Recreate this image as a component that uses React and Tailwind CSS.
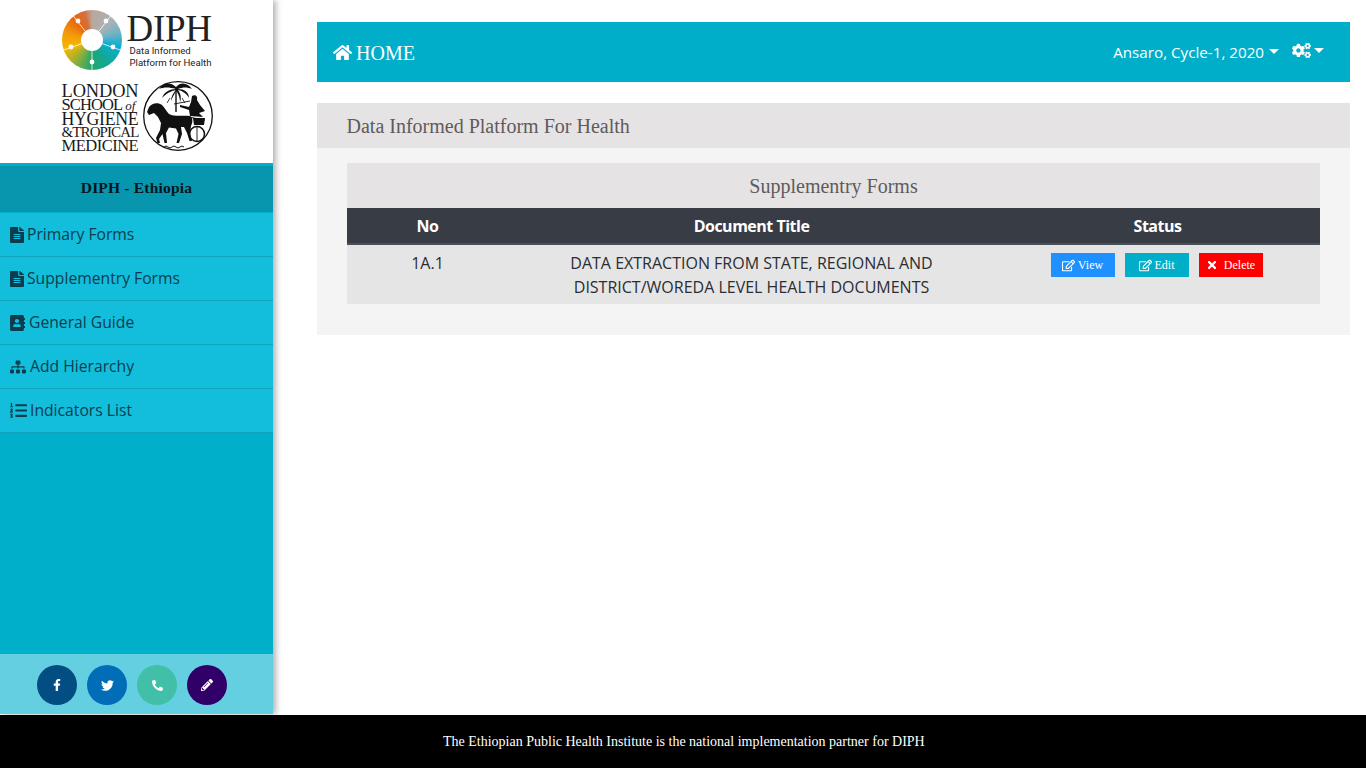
import React from "react";
import { FaHome, FaFileAlt, FaAddressBook, FaSitemap, FaListOl, FaCogs, FaFacebookF, FaTwitter, FaPhone, FaPencilAlt, FaRegEdit, FaTimes } from "react-icons/fa";

const fileIcon = { className: "w-[14px] h-[16px]", preserveAspectRatio: "none" };
const menu = [
  { label: "Primary Forms", Icon: FaFileAlt, gap: "gap-[3px]", props: fileIcon },
  { label: "Supplementry Forms", Icon: FaFileAlt, gap: "gap-[3px]", props: fileIcon },
  { label: "General Guide", Icon: FaAddressBook, gap: "gap-[4px]", props: { className: "w-[15px] h-[16px]", preserveAspectRatio: "none" } },
  { label: "Add Hierarchy", Icon: FaSitemap, gap: "gap-[4px]", props: { size: 16 } },
  { label: "Indicators List", Icon: FaListOl, gap: "gap-[3px]", props: { size: 17 } },
];

const social = [
  { Icon: FaFacebookF, bg: "bg-[#024e82]", size: 12 },
  { Icon: FaTwitter, bg: "bg-[#006db6]", size: 13 },
  { Icon: FaPhone, bg: "bg-[#42bfa8]", size: 11, flip: true },
  { Icon: FaPencilAlt, bg: "bg-[#300068]", size: 12 },
];

function DiphDisc() {
  const spokes = [[78, 21, 71, 13], [106, 21, 113, 13], [113, 47, 123, 51], [92, 62, 92, 71], [71, 47, 61, 51]];
  return (
    <div className="relative w-[60px] h-[60px] rounded-full shrink-0 bg-[conic-gradient(from_0deg,#b9a79c_0deg,#a9b2b6_45deg,#6fb2c6_75deg,#08aed0_105deg,#12a89a_140deg,#1ea76f_180deg,#8cae3d_215deg,#f4b800_250deg,#f39a0a_285deg,#e8650f_320deg,#d2703f_345deg,#b9a79c_360deg)]">
      <svg viewBox="62 10 60 60" className="absolute inset-0 w-full h-full">
        {spokes.map(([x, y, ex, ey]) => (
          <g key={x + "-" + y}>
            <line x1="92" y1="40" x2={ex} y2={ey} stroke="#fff" strokeWidth="0.8" />
            <circle cx={x} cy={y} r="2.4" fill="#fff" />
          </g>
        ))}
        <circle cx="92" cy="40" r="11" fill="#fff" />
      </svg>
    </div>
  );
}

function Emblem() {
  return (
    <svg viewBox="0 0 70 72" className="w-[70px] h-[72px] shrink-0">
      <circle cx="35" cy="36" r="34.3" fill="#fff" stroke="#111" strokeWidth="1.3" />
      {/* palm */}
      <path d="M33 8 L33 32" stroke="#111" strokeWidth="1.4" />
      <path d="M33 7 C27 1 20 3 16 9 C21 7 26 7 33 9 C27 9 21 12 19 18 C24 13 28 11 33 10 C30 13 28 17 28 21 C30 16 32 13 33 11 C35 13 37 17 37 22 C39 17 37 13 35 10 C40 11 44 14 46 18 C46 12 41 9 35 9 C40 7 44 7 49 9 C45 3 38 1 33 7 Z" fill="#111" />
      <path d="M27 18 l-3 5 M39 18 l3 5" stroke="#111" strokeWidth="0.8" />
      {/* charioteer */}
      <path d="M49 16 C52 14 55 16 54 20 L57 25 L62 31 L56 33 L60 37 L47 36 L46 30 L37 27 L37 25 L46 27 L48 22 Z" fill="#111" />
      <path d="M31 24 L47 21" stroke="#111" strokeWidth="0.9" />
      {/* horse */}
      <path d="M6 27 C9 23 15 22 19 25 C22 28 23 31 26 34 C32 37 40 35 47 36 C50 38 50 42 48 46 L47 53 L49 61 L46.5 61 L44 53 L41 47 L38 47 L39 54 L36 63 L33.5 63 L35.5 54 L33 48.5 L26 47.5 L23 53 L24 63 L21.5 63 L19.5 54 L16 59 L17 63 L14.5 63 L13 58 L17 50 L18 43 L15 37 L11 33 L6 35 L4 32 Z" fill="#111" />
      <path d="M45 37 L62 40" stroke="#111" strokeWidth="1.2" />
      <path d="M50 38 L62 38 L61 45 L51 45 Z" fill="#111" />
      {/* wheel */}
      <circle cx="54" cy="54" r="7.5" fill="none" stroke="#111" strokeWidth="1.5" />
      <path d="M54 46.5 V61.5" stroke="#111" strokeWidth="0.9" />
      {/* ground waves */}
      <path d="M21 67 q2 -2 4 0 t4 0 t4 0 t4 0 t4 0" fill="none" stroke="#111" strokeWidth="1" />
    </svg>
  );
}

function Logos() {
  return (
    <div className="h-[163px] bg-white flex flex-col items-center pt-[10px] pl-[1px] shrink-0">
      <div className="flex items-start w-[151px] h-[60px]">
        <DiphDisc />
        <div className="ml-[5px] flex flex-col text-[#222]">
          <div className="text-[37px] leading-[34px] mt-[2px] tracking-[-0.3px] font-['Liberation_Serif',serif]">DIPH</div>
          <div className="pl-[3px] -mt-[1px] text-[9.6px] leading-[12px] whitespace-nowrap font-['Roboto',sans-serif]">
            <div>Data Informed</div>
            <div>Platform for Health</div>
          </div>
        </div>
      </div>
      <div className="flex items-start w-[151px] mt-[10px] gap-[4px]">
        <div className="w-[78px] pt-[5px] leading-[13.3px] text-[#1a1a1a] whitespace-nowrap font-['Liberation_Serif',serif]">
          <div className="text-[18.4px] tracking-[-0.1px]">LONDON</div>
          <div className="text-[16.5px] tracking-[-0.9px]">SCHOOL<i className="text-[13px] tracking-normal"> of</i></div>
          <div className="text-[17.8px] tracking-[-0.3px]">HYGIENE</div>
          <div className="text-[15px] tracking-[-0.9px]">&amp;TROPICAL</div>
          <div className="text-[16.5px] tracking-[-0.5px]">MEDICINE</div>
        </div>
        <Emblem />
      </div>
    </div>
  );
}

function Sidebar() {
  return (
    <aside className="w-[273px] shrink-0 flex flex-col bg-[#00afc9] shadow-[3px_0_6px_rgba(0,0,0,0.3)] z-10">
      <Logos />
      <div className="pt-[3px]">
        <div className="h-[46px] bg-[#0796ad] flex items-center justify-center pb-[2px] text-[15.5px] font-bold text-[#04151c] tracking-[0.2px] font-['Liberation_Serif',serif]">
          DIPH - Ethiopia
        </div>
      </div>
      <nav className="mt-px flex-1 flex flex-col">
        {menu.map(({ label, Icon, gap, props }) => (
          <div key={label} className={"h-[44px] bg-[#12bedb] border-b border-[#0fa3bd] pl-[10px] flex items-center text-[15.7px] text-[#0c3d4f] font-['Open_Sans',sans-serif] " + gap}>
            <Icon {...props} />
            <span>{label}</span>
          </div>
        ))}
      </nav>
      <div className="h-[60px] bg-[#64cfe0] flex items-center justify-center gap-[10px] pr-[9px] pt-[2px]">
        {social.map(({ Icon, bg, size, flip }, i) => (
          <div key={i} className={"w-10 h-10 rounded-full flex items-center justify-center text-white " + bg}>
            <Icon size={size} className={flip ? "scale-x-[-1]" : ""} />
          </div>
        ))}
      </div>
    </aside>
  );
}

function Btn({ color, Icon, label, size = 13, gap = "gap-[3px]" }) {
  return (
    <div className={"w-16 h-6 flex items-center justify-center text-white text-[12px] font-['Liberation_Serif',serif] " + color + " " + gap}>
      <Icon size={size} />
      <span>{label}</span>
    </div>
  );
}

function Main() {
  return (
    <main className="flex-1 min-w-0 pl-[44px] pr-4 pt-[22px]">
      <header className="h-[60px] bg-[#00aec9] text-white flex items-center justify-between pl-4 pr-[26px]">
        <div className="flex items-center gap-[4px] pt-[2px] text-[20px] font-['Liberation_Serif',serif]">
          <FaHome size={19} className="-mt-[2px]" />
          <span>HOME</span>
        </div>
        <div className="flex items-center text-[15.2px] font-['Open_Sans',sans-serif]">
          <span>Ansaro, Cycle-1, 2020</span>
          <span className="ml-[5px] border-x-[5px] border-x-transparent border-t-[5px] border-t-white" />
          <FaCogs size={19} className="ml-[13px] -mt-[3px]" />
          <span className="ml-[3px] -mt-[3px] border-x-[5px] border-x-transparent border-t-[5px] border-t-white" />
        </div>
      </header>
      <section className="mt-[21px] bg-[#f4f4f4] pb-[31px]">
        <div className="h-[45px] bg-[#e5e3e4] flex items-center pl-[29.5px] text-[20px] text-[#5f5a5c] font-['Liberation_Serif',serif]">
          Data Informed Platform For Health
        </div>
        <div className="mt-[15px] mx-[30px]">
          <div className="h-[45px] bg-[#e5e3e4] flex items-center justify-center text-[20px] text-[#5f5a5c] font-['Liberation_Serif',serif]">
            Supplementry Forms
          </div>
          <div className="h-[37px] bg-[#383c44] border-b-2 border-[#4a5058] grid grid-cols-[161px_487px_325px] items-center text-center text-white text-[16px] tracking-[-0.5px] font-bold font-['Open_Sans',sans-serif]">
            <div>No</div>
            <div>Document Title</div>
            <div>Status</div>
          </div>
          <div className="h-[59px] bg-[#e6e5e5] grid grid-cols-[161px_487px_325px] text-center text-[#2a2d33] text-[16px] leading-[24px] font-['Open_Sans',sans-serif]">
            <div className="pt-[6px]">1A.1</div>
            <div className="pt-[6px] px-[40px]">DATA EXTRACTION FROM STATE, REGIONAL AND DISTRICT/WOREDA LEVEL HEALTH DOCUMENTS</div>
            <div className="pt-2 pr-[2px] flex justify-center gap-[10px] items-start">
              <Btn color="bg-[#1e90ff]" Icon={FaRegEdit} label="View" />
              <Btn color="bg-[#00aec9]" Icon={FaRegEdit} label="Edit" />
              <Btn color="bg-[#ff0000]" Icon={FaTimes} label="Delete" size={12} gap="gap-[6px]" />
            </div>
          </div>
        </div>
      </section>
    </main>
  );
}

export default function App() {
  return (
    <div className="h-screen flex flex-col bg-white overflow-hidden">
      <div className="h-[714px] flex shrink-0">
        <Sidebar />
        <Main />
      </div>
      <footer className="mt-px h-[53px] bg-black flex items-center text-white text-[14px] pl-[443px] font-['Liberation_Serif',serif]">
        The Ethiopian Public Health Institute is the national implementation partner for DIPH
      </footer>
    </div>
  );
}
